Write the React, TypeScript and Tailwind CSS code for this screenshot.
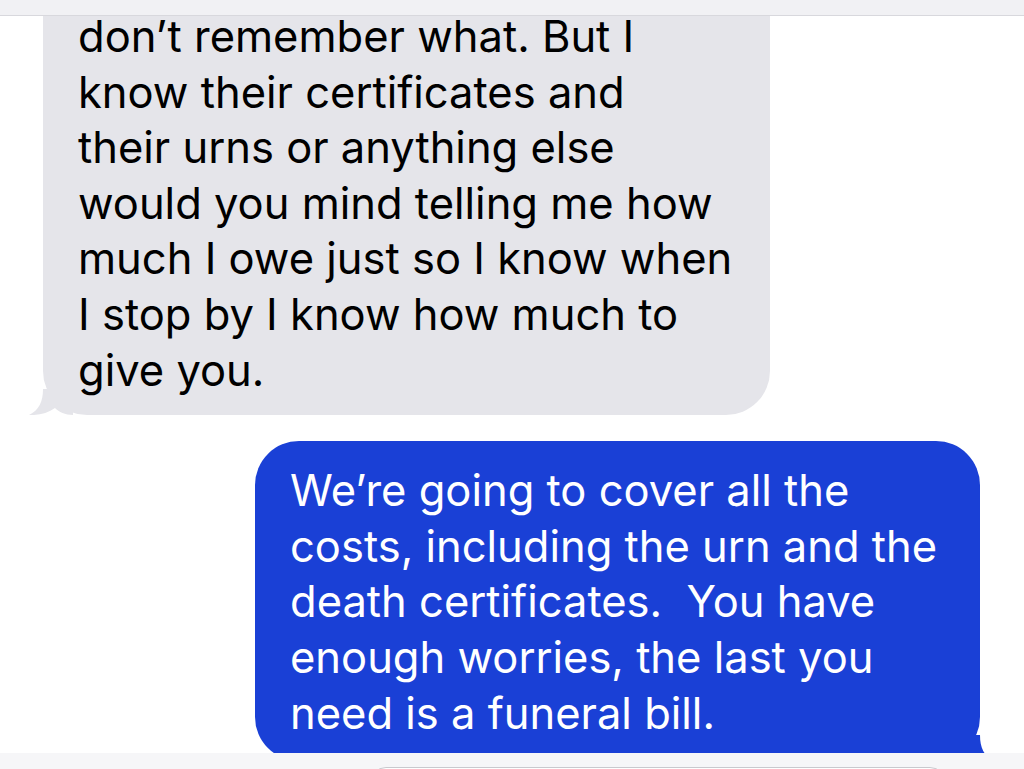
const received = [
  'don’t remember what. But I',
  'know their certificates and',
  'their urns or anything else',
  'would you mind telling me how',
  'much I owe just so I know when',
  'I stop by I know how much to',
  'give you.',
]

const sent = [
  'We’re going to cover all the',
  'costs, including the urn and the',
  'death certificates.  You have',
  'enough worries, the last you',
  'need is a funeral bill.',
]

function TailLeft() {
  return (
    <svg className="absolute -left-[14px] bottom-0" width="44" height="26" viewBox="0 0 44 26">
      <path d="M14 0 C14 13 10 21 0 26 C10 26.5 19 24 26 19 C30 23 36 26 44 26 L44 0 Z" fill="#e5e5ea" />
    </svg>
  )
}

function TailRight() {
  return (
    <svg className="absolute -right-[14px] bottom-0" width="44" height="26" viewBox="0 0 44 26">
      <path d="M30 0 C30 13 34 21 44 26 C34 26.5 25 24 18 19 C14 23 8 26 0 26 L0 0 Z" fill="#1a40d6" />
    </svg>
  )
}

export default function App() {
  return (
    <div className="relative h-[769px] w-[1024px] overflow-hidden bg-white" style={{ fontFamily: 'Inter, "Liberation Sans", sans-serif' }}>
      {/* messages */}
      <div className="flex flex-col -mt-[50px]">
        <div className="relative ml-[43px] w-[727px] rounded-[44px] bg-[#e5e5ea] pl-[35px] pt-[59px] pb-[17px] text-[43.5px] leading-[55.6px] text-black">
          {received.map((line) => (
            <div key={line} className="whitespace-pre">{line}</div>
          ))}
          <TailLeft />
        </div>

        <div className="relative ml-auto mr-[44px] mt-[26px] w-[725px] rounded-[44px] bg-[#1a40d6] pl-[35px] pt-[22px] pb-[20px] text-[43.5px] leading-[55.6px] text-white">
          {sent.map((line) => (
            <div key={line} className="whitespace-pre">{line}</div>
          ))}
          <TailRight />
        </div>
      </div>

      {/* top bar */}
      <div className="absolute inset-x-0 top-0 h-4 bg-[#f1f1f4] border-b border-[#d8d8dd]" />

      {/* bottom input bar */}
      <div className="absolute inset-x-0 bottom-0 h-4 bg-[#f6f6f8]">
        <div className="ml-[370px] mt-[14px] h-8 w-[576px] rounded-t-2xl border border-[#c9c9ce] bg-white" />
      </div>
    </div>
  )
}
